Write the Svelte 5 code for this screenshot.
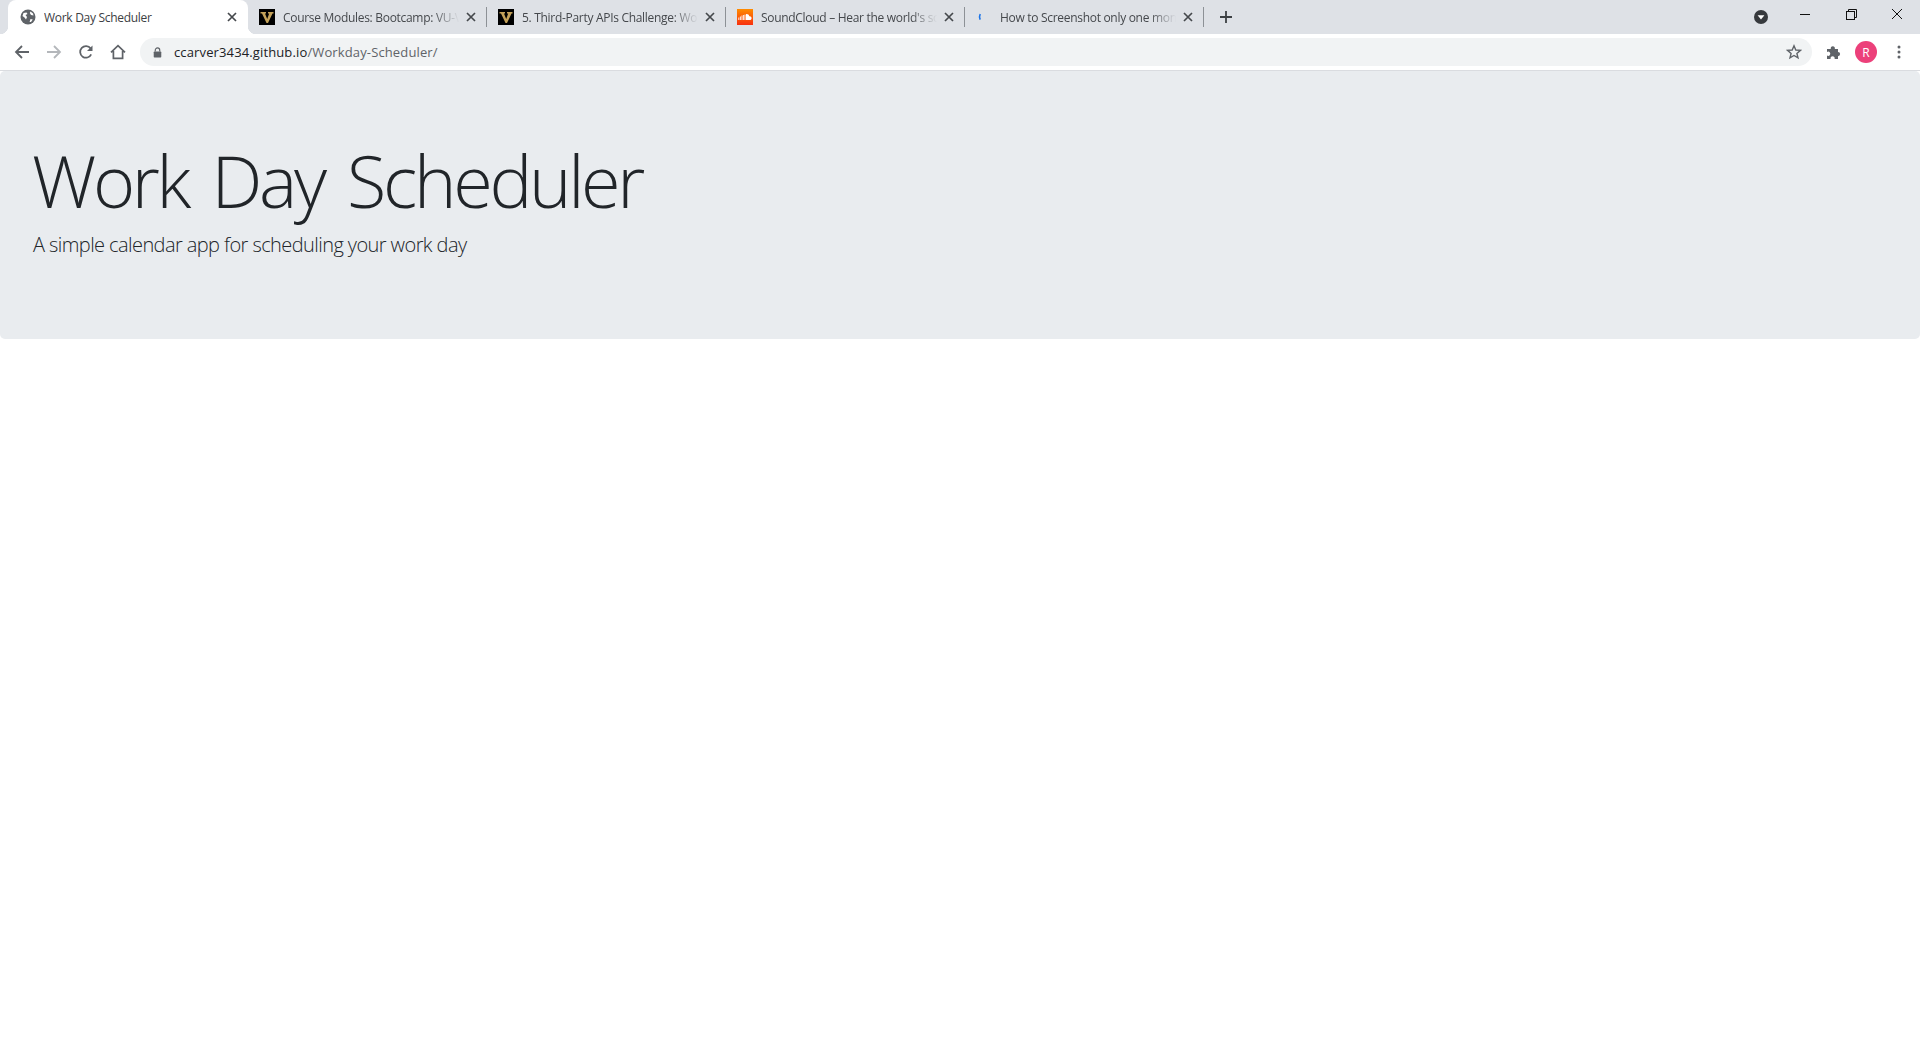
<script>
  const tabs = [
    { title: 'Work Day Scheduler', icon: 'globe', active: true },
    { title: 'Course Modules: Bootcamp: VU-V', icon: 'vu' },
    { title: '5. Third-Party APIs Challenge: Wo', icon: 'vu' },
    { title: "SoundCloud – Hear the world's so", icon: 'sc' },
    { title: 'How to Screenshot only one mon', icon: 'blue' },
  ];
</script>

<div class="browser">
  <div class="tabstrip">
    {#each tabs as tab}
      <div class="tab" class:active={tab.active}>
        <span class="favicon">
          {#if tab.icon === 'globe'}
            <svg viewBox="0 0 16 16" width="16" height="16">
              <circle cx="8" cy="8" r="7.5" fill="#5f6368" />
              <path d="M3.5 4 L6.5 3.5 L7.5 5 L5.5 6 L7 8 L6 10.5 L4.5 8.5 L2.5 7 Z M10.5 2.5 L13 4.5 L13.5 6.5 L11 6 L9.8 4 Z M10.5 10 L12.8 10.4 L11 13 L9.6 13 Z" fill="#fff" />
            </svg>
          {:else if tab.icon === 'vu'}
            <svg viewBox="0 0 16 16" width="16" height="16">
              <rect width="16" height="16" fill="#000" />
              <path d="M1.5 3 H7 V4.5 H6 L8.2 10 L10.2 4.5 H9 V3 H14.5 V4.5 H13.5 L9 14 H7.5 L3 4.5 H1.5 Z" fill="#c4a25a" />
            </svg>
          {:else if tab.icon === 'sc'}
            <svg viewBox="0 0 16 16" width="16" height="16">
              <defs>
                <linearGradient id="sc-bg" x1="0" y1="0" x2="0" y2="1">
                  <stop offset="0" stop-color="#fe8c00" />
                  <stop offset="1" stop-color="#f8300f" />
                </linearGradient>
              </defs>
              <rect width="16" height="16" fill="url(#sc-bg)" />
              <path d="M9 5.2 C10.6 4.8 12 5.8 12.3 7.3 C13.6 7 14.6 8 14.6 9.2 C14.6 10.3 13.8 11 12.8 11 H9 Z" fill="#fff" />
              <path d="M1.8 8.5 V11 M3.4 7.5 V11 M5 6.5 V11 M6.6 6 V11 M8 5.6 V11" stroke="#fff" stroke-width="0.9" />
            </svg>
          {:else}
            <svg viewBox="0 0 16 16" width="16" height="16">
              <path d="M4.2 5 C3.4 6.6 3.4 8.6 4.2 10.6" fill="none" stroke="#1a73e8" stroke-width="1.6" />
            </svg>
          {/if}
        </span>
        <span class="tab-title">{tab.title}</span>
        <svg class="tab-close" viewBox="0 0 10 10" width="10" height="10">
          <path d="M1 1 L9 9 M9 1 L1 9" stroke="#45484c" stroke-width="1.7" fill="none" />
        </svg>
      </div>
    {/each}
    <svg class="newtab" viewBox="0 0 12 12" width="12" height="12">
      <path d="M6 0 V12 M0 6 H12" stroke="#3c4043" stroke-width="1.8" fill="none" />
    </svg>
    <div class="strip-right">
      <svg class="search-tabs" viewBox="0 0 14 14" width="14" height="14">
        <circle cx="7" cy="7" r="7" fill="#36393d" />
        <path d="M3.6 5.2 H10.4 L7 9.6 Z" fill="#fff" />
      </svg>
      <div class="winctl">
        <svg viewBox="0 0 46 30" width="46" height="30"><path d="M18 14.5 H28" stroke="#111" fill="none" /></svg>
        <svg viewBox="0 0 46 30" width="46" height="30">
          <rect x="18.5" y="11.5" width="8" height="8" fill="none" stroke="#111" />
          <path d="M20.5 11 V9.5 H28.5 V17.5 H27" fill="none" stroke="#111" />
        </svg>
        <svg viewBox="0 0 46 30" width="46" height="30"><path d="M18 9 L28 19 M28 9 L18 19" stroke="#111" fill="none" /></svg>
      </div>
    </div>
  </div>

  <div class="toolbar">
    <div class="navs">
      <svg viewBox="0 0 16 16" width="16" height="16"><path d="M15 8 H2 M8 2 L2 8 L8 14" stroke="#5f6368" stroke-width="1.8" fill="none" /></svg>
      <svg viewBox="0 0 16 16" width="16" height="16"><path d="M1 8 H14 M8 2 L14 8 L8 14" stroke="#b4b7bb" stroke-width="1.8" fill="none" /></svg>
      <svg viewBox="0 0 16 16" width="16" height="16"><path d="M13.2 10.4 A5.8 5.8 0 1 1 12.6 4.4" stroke="#5f6368" stroke-width="1.8" fill="none" /><path d="M14.5 1.5 V7 H9 Z" fill="#5f6368" /></svg>
      <svg viewBox="0 0 16 16" width="16" height="16"><path d="M1 8.4 L8 1.6 L15 8.4 M3.4 7 V14.4 H12.6 V7" stroke="#5f6368" stroke-width="1.7" fill="none" /></svg>
    </div>
    <div class="omnibox">
      <svg class="lock" viewBox="0 0 10 12" width="9" height="11">
        <path d="M2.5 5 V3.4 A2.5 2.5 0 0 1 7.5 3.4 V5" stroke="#5f6368" stroke-width="1.3" fill="none" />
        <rect x="0.8" y="5" width="8.4" height="6.6" rx="0.8" fill="#5f6368" />
      </svg>
      <span class="url"><span class="host">ccarver3434.github.io</span>/Workday-Scheduler/</span>
      <svg class="star" viewBox="0 0 16 16" width="16" height="16">
        <path d="M8 1.8 L9.8 6 L14.4 6.4 L10.9 9.4 L12 13.9 L8 11.5 L4 13.9 L5.1 9.4 L1.6 6.4 L6.2 6 Z" stroke="#5f6368" stroke-width="1.4" fill="none" />
      </svg>
    </div>
    <div class="actions">
      <svg viewBox="0 0 16 16" width="16" height="16">
        <path d="M1 5 H4.8 A2.1 2.1 0 1 1 8.8 5 H12 V8 A2.1 2.1 0 1 1 12 12.2 V15 H8.6 A2.1 2.1 0 1 0 4.6 15 H1 V11.5 A2.1 2.1 0 1 0 1 8 Z" fill="#5f6368" />
      </svg>
      <span class="avatar">R</span>
      <svg viewBox="0 0 4 14" width="4" height="14">
        <circle cx="2" cy="2" r="1.5" fill="#5f6368" /><circle cx="2" cy="7" r="1.5" fill="#5f6368" /><circle cx="2" cy="12" r="1.5" fill="#5f6368" />
      </svg>
    </div>
  </div>
</div>

<header class="jumbotron">
  <h1>Work Day Scheduler</h1>
  <p class="lead">A simple calendar app for scheduling your work day</p>
</header>

<style>
  :global(body) {
    background: #fff;
    font-family: "Open Sans", "Liberation Sans", sans-serif;
  }

  .browser { border-bottom: 1px solid #dadce0; }

  .tabstrip {
    height: 34px;
    background: #dee1e6;
    display: flex;
    align-items: stretch;
    padding-left: 8px;
  }
  .tab {
    position: relative;
    width: 239px;
    flex-shrink: 0;
    display: flex;
    align-items: center;
    padding-left: 12px;
    box-sizing: border-box;
    color: #45484c;
  }
  .tab::after {
    content: '';
    position: absolute;
    right: -1px;
    top: 7px;
    height: 20px;
    width: 1px;
    background: #8d9196;
  }
  .tab.active {
    width: 240px;
    margin-right: -1px;
    background: #fff;
    border-radius: 8px 8px 0 0;
    color: #3c4043;
    z-index: 1;
  }
  .tab.active::before {
    content: '';
    position: absolute;
    left: -8px;
    right: -8px;
    bottom: 0;
    height: 8px;
    z-index: -1;
    background:
      radial-gradient(circle at 0 0, #dee1e6 8px, #fff 8.5px) left top / 8px 8px no-repeat,
      radial-gradient(circle at 100% 0, #dee1e6 8px, #fff 8.5px) right top / 8px 8px no-repeat;
  }
  .tab.active::after { display: none; }
  .favicon { width: 16px; height: 16px; flex-shrink: 0; display: flex; }
  .tab-title {
    margin-left: 8px;
    width: 180px;
    font-size: 12px;
    letter-spacing: -0.3px;
    white-space: nowrap;
    overflow: hidden;
    -webkit-mask-image: linear-gradient(to right, #000 150px, transparent 176px);
    mask-image: linear-gradient(to right, #000 150px, transparent 176px);
  }
  .tab.active .tab-title { -webkit-mask-image: none; mask-image: none; }
  .tab-close { position: absolute; left: 219px; top: 12px; }
  .newtab { align-self: center; margin-left: 17px; }

  .strip-right {
    margin-left: auto;
    display: flex;
    align-items: flex-start;
  }
  .search-tabs { margin-top: 10px; margin-right: 14px; }
  .winctl { display: flex; }

  .toolbar {
    height: 36px;
    background: #fff;
    display: flex;
    align-items: center;
  }
  .navs {
    display: flex;
    align-items: center;
    gap: 16px;
    padding-left: 14px;
    width: 126px;
    box-sizing: border-box;
    flex-shrink: 0;
  }
  .omnibox {
    width: 1672px;
    height: 28px;
    margin-left: 14px;
    flex-shrink: 0;
    background: #f1f3f4;
    border-radius: 14px;
    display: flex;
    align-items: center;
    box-sizing: border-box;
    padding: 0 10px 0 13px;
  }
  .url {
    margin-left: 12px;
    font-size: 13px;
    letter-spacing: 0.13px;
    color: #5f6368;
  }
  .host { color: #202124; }
  .star { margin-left: auto; }
  .actions {
    display: flex;
    align-items: center;
    padding-left: 14px;
    gap: 13px;
  }
  .avatar {
    width: 22px;
    height: 22px;
    border-radius: 50%;
    background: #ec407a;
    color: #fff;
    font-size: 12px;
    display: flex;
    align-items: center;
    justify-content: center;
  }
  .actions svg:last-child { margin-left: 7px; }

  .jumbotron {
    background: #e9ecef;
    border-radius: 5px;
    padding: 66px 32px 0;
    height: 268px;
    box-sizing: border-box;
    color: #212529;
  }
  h1 {
    margin: 0 0 7px;
    font-size: 72px;
    font-weight: 300;
    line-height: 1.2;
    letter-spacing: -3.3px;
    word-spacing: 8px;
  }
  .lead {
    margin: 0 0 0 1px;
    font-size: 20px;
    font-weight: 300;
    line-height: 1.5;
    letter-spacing: -0.58px;
  }
</style>
